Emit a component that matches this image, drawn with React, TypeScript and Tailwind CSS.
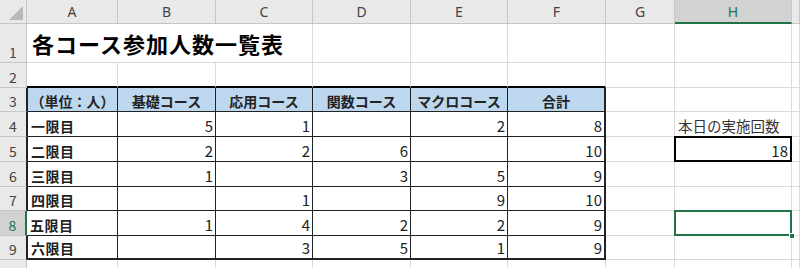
import { clsx } from "clsx";

const cols = ["A", "B", "C", "D", "E", "F", "G", "H", ""];
const heads = ["（単位：人）", "基礎コース", "応用コース", "関数コース", "マクロコース", "合計"];

type Val = number | "";

const periods: { label: string; vals: Val[] }[] = [
  { label: "一限目", vals: [5, 1, "", 2, 8] },
  { label: "二限目", vals: [2, 2, 6, "", 10] },
  { label: "三限目", vals: [1, "", 3, 5, 9] },
  { label: "四限目", vals: ["", 1, "", 9, 10] },
  { label: "五限目", vals: [1, 4, 2, 2, 9] },
  { label: "六限目", vals: ["", 3, 5, 1, 9] },
];

const font = "font-['Noto_Sans_CJK_JP','Noto_Sans',sans-serif]";

function RowHead({ n, active, table }: { n: number; active?: boolean; table?: boolean }) {
  return (
    <div
      className={clsx(
        "flex items-end justify-center border-b pb-[3px] text-[14px] leading-none",
        active
          ? "border-r-2 border-b-[#c6c6c6] border-r-[#217346] bg-[#d2d2d2] text-[#217346]"
          : "border-r border-[#c6c6c6] bg-[#e9e9e9] text-[#444]",
        table && !active && "border-r-[#222]"
      )}
    >
      {n}
    </div>
  );
}

function Blank({ bottom }: { bottom?: boolean }) {
  return (
    <div
      className={clsx(
        "border-r border-b border-[#dadada]",
        bottom && "border-b-2 border-b-black"
      )}
    />
  );
}

export default function App() {
  return (
    <div
      className={clsx(
        "grid h-[268px] w-[800px] overflow-hidden bg-white text-[#222]",
        font,
        "grid-cols-[27px_91px_98px_97px_98px_97px_98px_69px_117px_1fr]",
        "grid-rows-[24px_39px_25px_24px_25px_25px_25px_24px_25px_24px_24px]"
      )}
    >
      {/* select-all corner */}
      <div className="relative border-r border-b border-[#c6c6c6] bg-[#e9e9e9]">
        <svg className="absolute right-[3px] bottom-[3px]" width="14" height="14">
          <polygon points="14,0 14,14 0,14" fill="#b9b9b9" />
        </svg>
      </div>
      {cols.map((c, i) =>
        c === "H" ? (
          <div
            key={i}
            className="flex items-center justify-center border-r border-b-2 border-r-[#c6c6c6] border-b-[#217346] bg-[#d2d2d2] font-['Noto_Sans',sans-serif] text-[14px] text-[#217346]"
          >
            {c}
          </div>
        ) : (
          <div
            key={i}
            className="flex items-center justify-center border-r border-b border-[#c6c6c6] bg-[#e9e9e9] font-['Noto_Sans',sans-serif] text-[14px] text-[#444]"
          >
            {c}
          </div>
        )
      )}

      {/* row 1: title */}
      <RowHead n={1} />
      <div className="relative col-span-3 flex items-end border-r border-b border-[#dadada] pb-[8px] pl-[5px]">
        <span className="whitespace-nowrap text-[22px] leading-none font-bold tracking-[1px] text-black">
          各コース参加人数一覧表
        </span>
      </div>
      {[0, 1, 2, 3, 4, 5].map((i) => (
        <Blank key={i} />
      ))}

      {/* row 2 */}
      <RowHead n={2} />
      {[0, 1, 2, 3, 4, 5].map((i) => (
        <Blank key={i} bottom />
      ))}
      {[0, 1, 2].map((i) => (
        <Blank key={i} />
      ))}

      {/* row 3: table header */}
      <RowHead n={3} table />
      {heads.map((h, i) => (
        <div
          key={h}
          className={clsx(
            "flex items-end justify-center border-r border-b border-[#222] bg-[#bdd7ee] pb-[3px] text-[14px] leading-none font-bold whitespace-nowrap",
            i === 0 && "border-l",
            i === 5 && "border-r-2"
          )}
        >
          {h}
        </div>
      ))}
      <Blank />
      <Blank />
      <Blank />

      {periods.map((p, r) => {
        const rowNo = r + 4;
        const last = r === periods.length - 1;
        return (
          <div key={p.label} className="contents">
            <RowHead n={rowNo} active={rowNo === 8} table />
            <div
              className={clsx(
                "flex items-end border-r border-b border-[#222] pb-[3px] pl-[3px] text-[14px] leading-none font-bold tracking-[0.5px]",
                rowNo !== 8 && "border-l",
                last && "border-b-2"
              )}
            >
              {p.label}
            </div>
            {p.vals.map((v, i) => (
              <div
                key={i}
                className={clsx(
                  "flex items-end justify-end border-r border-b border-[#222] pr-[2px] pb-[3px] text-[15px] leading-none",
                  i === 4 && "border-r-2",
                  last && "border-b-2"
                )}
              >
                {v}
              </div>
            ))}
            <Blank />
            {rowNo === 4 ? (
              <div className="flex items-end border-r border-b border-[#dadada] pb-[3px] pl-[3px] text-[14.5px] leading-none whitespace-nowrap text-[#333]">
                本日の実施回数
              </div>
            ) : rowNo === 5 ? (
              <div className="relative flex items-end justify-end border-r border-b border-[#dadada] pr-[3px] pb-[3px] text-[15px] leading-none">
                <div className="absolute -top-px -right-px -bottom-px -left-px border-2 border-black" />
                18
              </div>
            ) : rowNo === 8 ? (
              <div className="relative border-r border-b border-[#dadada]">
                <div className="absolute -top-px -right-px -bottom-px -left-px border-2 border-[#217346]" />
                <div className="absolute -right-[4px] -bottom-[4px] h-[6px] w-[6px] border border-white bg-[#217346]" />
              </div>
            ) : (
              <Blank />
            )}
            <Blank />
          </div>
        );
      })}

      {/* row 10, only its top edge fits in the window */}
      <RowHead n={10} />
      {[0, 1, 2, 3, 4, 5, 6, 7, 8].map((i) => (
        <Blank key={i} />
      ))}
    </div>
  );
}
